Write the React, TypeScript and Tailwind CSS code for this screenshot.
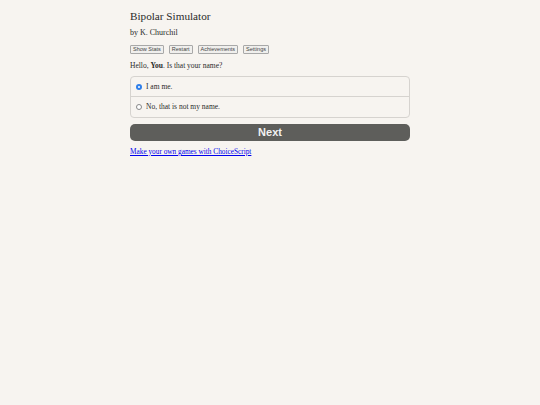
export default function App() {
  return (
    <div className="min-h-[405px] w-full bg-[#f7f4f0] font-['Liberation_Serif',serif] text-[#2a2a2a]">
      <div className="mx-auto w-[280px] pt-[9px]">
        <h1 className="font-['Liberation_Serif',serif] text-[11.2px] leading-[15px]">Bipolar Simulator</h1>
        <p className="mt-[4px] text-[8px] leading-[10px]">by K. Churchil</p>
        <div className="mt-[7px] flex gap-[5px] font-['Liberation_Sans',sans-serif]">
          {["Show Stats", "Restart", "Achievements", "Settings"].map((b) => (
            <button
              key={b}
              className="h-[9px] rounded-[1px] border border-[#a8a8a8] bg-[#f0efed] px-[2px] text-[5.5px] leading-[7px] text-[#444]"
            >
              {b}
            </button>
          ))}
        </div>
        <p className="mt-[7px] text-[7.5px] leading-[10px]">
          Hello, <b>You</b>. Is that your name?
        </p>
        <div className="mt-[5px] rounded-[4px] border border-[#d6d3cf] text-[7.5px]">
          <label className="flex h-[20px] items-center gap-[4px] border-b border-[#d6d3cf] pl-[5px]">
            <span className="flex h-[6px] w-[6px] items-center justify-center rounded-full bg-[#2f7fea]">
              <span className="h-[2px] w-[2px] rounded-full bg-white" />
            </span>
            I am me.
          </label>
          <label className="flex h-[20px] items-center gap-[4px] pl-[5px]">
            <span className="h-[6px] w-[6px] rounded-full border border-[#888] bg-white" />
            No, that is not my name.
          </label>
        </div>
        <button className="mt-[6px] block h-[17px] w-full rounded-[5px] bg-[#5e5e5b] font-['Liberation_Sans',sans-serif] text-[11px] leading-[17px] font-bold text-[#f2f2f2]">
          Next
        </button>
        <a href="#" className="mt-[6px] block text-[7.3px] leading-[10px] text-[#0000ee] underline">
          Make your own games with ChoiceScript
        </a>
      </div>
    </div>
  );
}
